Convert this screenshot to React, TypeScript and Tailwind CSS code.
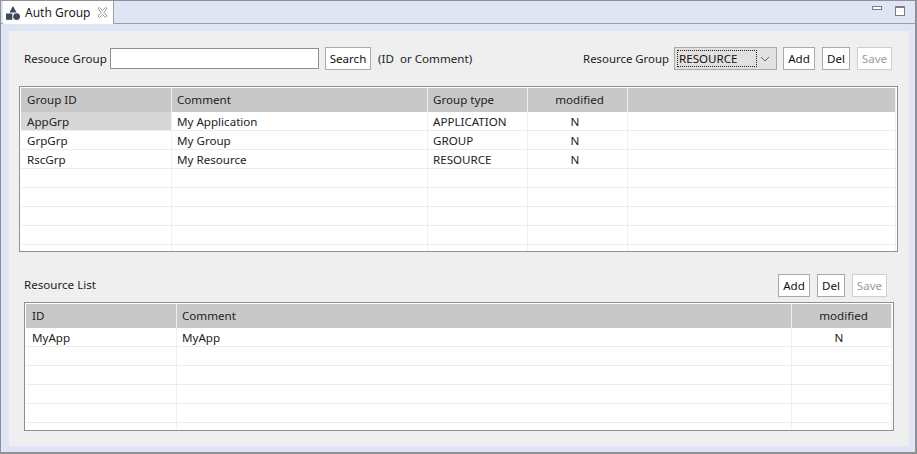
const font = "font-['Noto_Sans','Open_Sans',sans-serif]";

function Btn({ children, disabled, w }: { children: string; disabled?: boolean; w: string }) {
  return (
    <div className={`${w} h-[23px] bg-white border flex items-center justify-center text-[11.6px] ${disabled ? 'border-[#cfcfcf] text-[#9a9a9a]' : 'border-[#a9a9a9] text-[#111]'}`}>
      {children}
    </div>
  );
}

type Col = { label: string; w: string; center?: boolean; first?: boolean };

function Table({ cols, rows, selectFirst, h }: { cols: Col[]; rows: string[][]; selectFirst?: boolean; h: string }) {
  const blanks = Array.from({ length: 8 });
  return (
    <div className={`${h} bg-white border border-[#8c8f93] p-px overflow-hidden`}>
      <div className="flex h-[24px] bg-[#c8c8c8]">
        {cols.map((c, i) => (
          <div key={i} className={`${c.w} h-full border-r border-[#eeeeee] flex items-center text-[#222] ${c.center ? 'justify-center pl-[4px]' : c.first ? 'pl-[6px]' : 'pl-[5px]'}`}>
            {c.label}
          </div>
        ))}
      </div>
      {blanks.map((_, r) => (
        <div key={r} className="flex h-[19px] border-b border-[#ececec]">
          {cols.map((c, i) => (
            <div key={i} className={`${c.w} h-full border-r border-[#eef0f6] flex items-center pt-px text-[#222] ${c.center ? 'justify-center pr-[5px]' : c.first ? 'pl-[6px]' : 'pl-[5px]'} ${selectFirst && r === 0 && i === 0 ? 'bg-[#d6d6d6]' : ''}`}>
              {rows[r]?.[i] ?? ''}
            </div>
          ))}
        </div>
      ))}
    </div>
  );
}

export default function App() {
  return (
    <div className={`${font} w-[917px] h-[454px] overflow-hidden bg-white border-t border-l border-r-2 border-b-2 border-[#8f9194] flex flex-col text-[11.6px] leading-none`}>
      <div className="h-[23px] shrink-0 bg-[#dfe5f4] border-b border-[#9a9da2] flex justify-between pl-[2px] pr-[10px]">
        <div className="w-[111px] h-[23px] bg-white border-r border-[#9a9da2] flex items-center pl-[3px] text-[#1c1c1c]">
          <svg width="14" height="14" viewBox="0 0 14 14" className="shrink-0 mt-[1px]">
            <path d="M7 0 L10.6 6.4 H3.4 Z" fill="#3d4a5c" />
            <rect x="0" y="7.5" width="6.3" height="6.3" fill="#3d4a5c" />
            <circle cx="10.6" cy="10.6" r="3.4" fill="#3d4a5c" />
          </svg>
          <span className="ml-[5px] mt-[1px] text-[12px] whitespace-nowrap">Auth Group</span>
          <svg width="11" height="11" viewBox="0 0 11 11" className="ml-[7px] shrink-0" fill="none" stroke="#9a9a9a" strokeWidth="1">
            <path d="M1 1.5 L2.5 0.5 L5.5 3.5 L8.5 0.5 L10 1.5 L7 5.5 L10 9 L8.5 10.5 L5.5 7.5 L2.5 10.5 L1 9 L4 5.5 Z" />
          </svg>
        </div>
        <div className="flex items-start gap-[13px] pt-[5px]">
          <div className="w-[10px] h-[4px] border border-[#7d7d7d] bg-white" />
          <div className="w-[10px] h-[10px] border border-[#7d7d7d] border-t-2 bg-white" />
        </div>
      </div>

      <div className="flex-1 bg-[#dfe5f4] pt-[7px] pl-[8px] pr-[6px] pb-[6px] flex">
        <div className="flex-1 bg-[#efefef] flex flex-col">
          <div className="h-[55px] flex items-start pt-[16px] pl-[15px] pr-[17px] shrink-0">
            <span className="text-[#1c1c1c] mt-[6px] w-[86px]">Resouce Group</span>
            <div className="w-[209px] h-[21px] mt-px bg-white border border-[#8c8f93]" />
            <div className="ml-[6px]"><Btn w="w-[46px]">Search</Btn></div>
            <span className="ml-[7px] mt-[6px] text-[#1c1c1c] whitespace-pre">(ID  or Comment)</span>
            <span className="ml-auto mt-[6px] text-[#1c1c1c] text-[11.4px]">Resource Group</span>
            <div className="ml-[5px] w-[103px] h-[23px] bg-[#e1e1e1] border border-[#a9a9a9] flex items-center justify-between pl-[2px] pr-[6px]">
              <span className="border border-dotted border-[#222] w-[80px] h-[17px] flex items-center pl-px text-[#111]">RESOURCE</span>
              <svg width="10" height="6" viewBox="0 0 10 6" fill="none" stroke="#666" strokeWidth="1"><path d="M1 1 L5 5 L9 1" /></svg>
            </div>
            <div className="ml-[6px]"><Btn w="w-[32px]">Add</Btn></div>
            <div className="ml-[7px]"><Btn w="w-[28px]">Del</Btn></div>
            <div className="ml-[7px]"><Btn w="w-[35px]" disabled>Save</Btn></div>
          </div>

          <div className="pl-[10px] pr-[11px]">
            <Table
              h="h-[166px]"
              selectFirst
              cols={[
                { label: 'Group ID', w: 'w-[151px]', first: true },
                { label: 'Comment', w: 'w-[256px]' },
                { label: 'Group type', w: 'w-[100px]' },
                { label: 'modified', w: 'w-[100px]', center: true },
                { label: '', w: 'flex-1' },
              ]}
              rows={[
                ['AppGrp', 'My Application', 'APPLICATION', 'N', ''],
                ['GrpGrp', 'My Group', 'GROUP', 'N', ''],
                ['RscGrp', 'My Resource', 'RESOURCE', 'N', ''],
              ]}
            />
          </div>

          <div className="h-[50px] flex items-end pb-[5px] pl-[15px] pr-[22px] shrink-0">
            <span className="text-[#1c1c1c] mb-[6px] mr-auto">Resource List</span>
            <Btn w="w-[32px]">Add</Btn>
            <div className="ml-[7px]"><Btn w="w-[28px]">Del</Btn></div>
            <div className="ml-[7px]"><Btn w="w-[35px]" disabled>Save</Btn></div>
          </div>

          <div className="pl-[15px] pr-[15px]">
            <Table
              h="h-[129px]"
              cols={[
                { label: 'ID', w: 'w-[151px]', first: true },
                { label: 'Comment', w: 'flex-1' },
                { label: 'modified', w: 'w-[100px]', center: true },
              ]}
              rows={[['MyApp', 'MyApp', 'N']]}
            />
          </div>
        </div>
      </div>
    </div>
  );
}
